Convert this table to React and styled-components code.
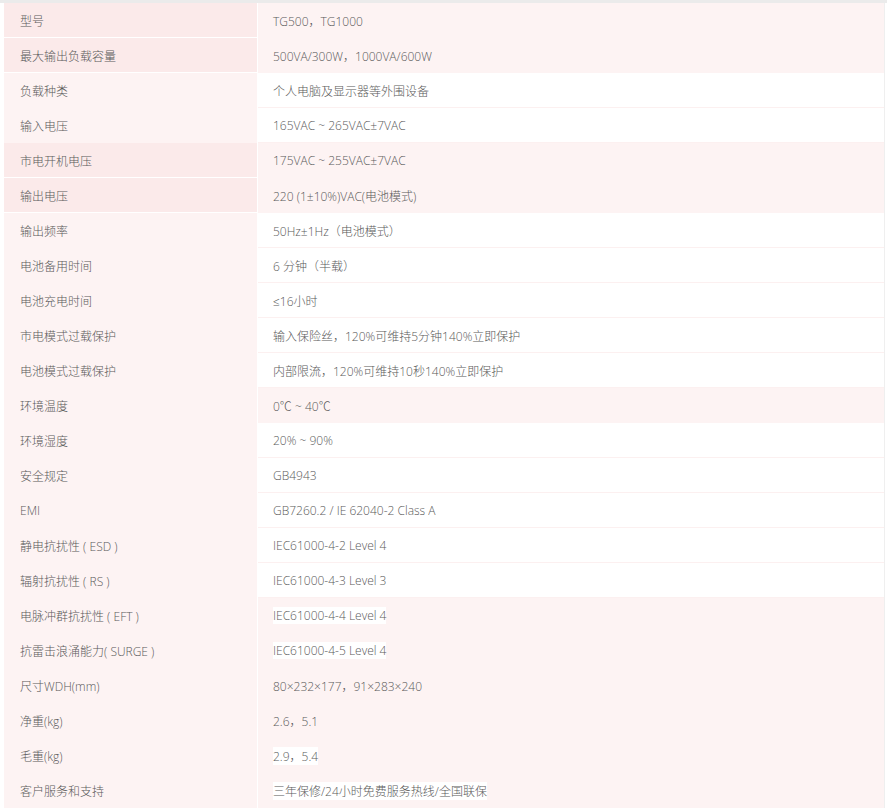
import styled, { createGlobalStyle } from 'styled-components';

const GlobalStyle = createGlobalStyle`
  html, body {
    margin: 0;
    padding: 0;
    background: #fff;
  }
  body {
    font-family: "Open Sans", "Noto Sans CJK SC", sans-serif;
  }
`;

const specs = [
  { name: '型号', value: 'TG500，TG1000', left: 'dark', right: 'pink' },
  { name: '最大输出负载容量', value: '500VA/300W，1000VA/600W', left: 'dark', right: 'pink' },
  { name: '负载种类', value: '个人电脑及显示器等外围设备', left: 'light', right: 'white' },
  { name: '输入电压', value: '165VAC ~ 265VAC±7VAC', left: 'light', right: 'white' },
  { name: '市电开机电压', value: '175VAC ~ 255VAC±7VAC', left: 'dark', right: 'pink' },
  { name: '输出电压', value: '220 (1±10%)VAC(电池模式)', left: 'dark', right: 'pink' },
  { name: '输出频率', value: '50Hz±1Hz（电池模式）', left: 'light', right: 'white' },
  { name: '电池备用时间', value: '6 分钟（半载）', left: 'light', right: 'white' },
  { name: '电池充电时间', value: '≤16小时', left: 'light', right: 'white' },
  { name: '市电模式过载保护', value: '输入保险丝，120%可维持5分钟140%立即保护', left: 'light', right: 'white' },
  { name: '电池模式过载保护', value: '内部限流，120%可维持10秒140%立即保护', left: 'light', right: 'white' },
  { name: '环境温度', value: '0℃ ~ 40℃', left: 'light', right: 'pink' },
  { name: '环境湿度', value: '20% ~ 90%', left: 'light', right: 'white' },
  { name: '安全规定', value: 'GB4943', left: 'light', right: 'white' },
  { name: 'EMI', value: 'GB7260.2 / IE 62040-2 Class A', left: 'light', right: 'white' },
  { name: '静电抗扰性 ( ESD )', value: 'IEC61000-4-2 Level 4', left: 'light', right: 'white' },
  { name: '辐射抗扰性 ( RS )', value: 'IEC61000-4-3 Level 3', left: 'light', right: 'white' },
  { name: '电脉冲群抗扰性 ( EFT )', value: 'IEC61000-4-4 Level 4', left: 'light', right: 'pink', mark: true },
  { name: '抗雷击浪涌能力( SURGE )', value: 'IEC61000-4-5 Level 4', left: 'light', right: 'pink', mark: true },
  { name: '尺寸WDH(mm)', value: '80×232×177，91×283×240', left: 'light', right: 'pink' },
  { name: '净重(kg)', value: '2.6，5.1', left: 'light', right: 'pink' },
  { name: '毛重(kg)', value: '2.9，5.4', left: 'light', right: 'pink', mark: true },
  { name: '客户服务和支持', value: '三年保修/24小时免费服务热线/全国联保', left: 'light', right: 'pink', mark: true },
];

const tones = {
  dark: { bg: '#fbeaea', line: '#ffffff' },
  light: { bg: '#fdf3f3', line: '#fdf3f3' },
  pink: { bg: '#fdf3f3', line: '#fdf3f3' },
  white: { bg: '#ffffff', line: '#fcf0f0' },
};

const App = () => {
  return (
    <>
      <GlobalStyle />
      <TopBar />
      <SpecTable>
        {specs.map((s) => (
          <Row key={s.name}>
            <NameCell $tone={s.left}>{s.name}</NameCell>
            <ValueCell $tone={s.right}>
              {s.mark ? <Mark>{s.value}</Mark> : s.value}
            </ValueCell>
          </Row>
        ))}
      </SpecTable>
    </>
  );
};

export default App;

const TopBar = styled.div`
  height: 3px;
  background: #ebebeb;
`;

const SpecTable = styled.div`
  display: flex;
  flex-direction: column;
  width: 880px;
  margin-left: 4px;
  border-right: 1px solid #efefef;
`;

const Row = styled.div`
  display: grid;
  grid-template-columns: 253px 1fr;
  column-gap: 1px;
  background: #fff;
  height: 35px;
`;

const Cell = styled.div`
  display: flex;
  align-items: center;
  box-sizing: border-box;
  font-size: 12px;
  font-weight: 300;
  color: #5a5a5a;
  white-space: nowrap;
  background: ${(p) => tones[p.$tone].bg};
  border-bottom: 1px solid ${(p) => tones[p.$tone].line};
  padding-top: 1px;
`;

const NameCell = styled(Cell)`
  padding-left: 16px;
`;

const ValueCell = styled(Cell)`
  padding-left: 15px;
`;

const Mark = styled.span`
  background: #fff;
`;
